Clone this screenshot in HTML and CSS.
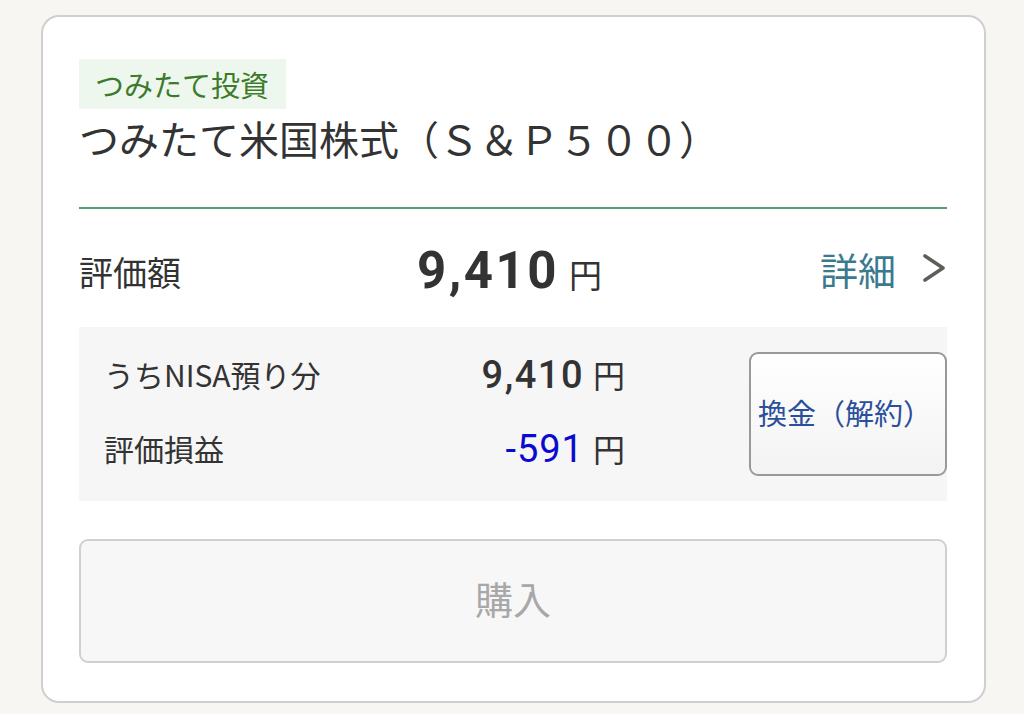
FILE: index.html
```html
<!DOCTYPE html>
<html lang="ja">
<head>
  <meta charset="UTF-8" />
  <meta name="viewport" content="width=device-width, initial-scale=1.0" />
  <title>つみたて米国株式</title>
  <link rel="stylesheet" href="styles.css">
</head>
<body>
  <div class="fund-card">
    <span class="badge">つみたて投資</span>
    <h2 class="fund-name">つみたて米国株式（Ｓ＆Ｐ５００）</h2>

    <div class="value-row">
      <span class="value-label">評価額</span>
      <span class="value-amount"><span class="num">9,410</span><span class="yen">円</span></span>
      <a class="detail-link" href="#">詳細
        <svg class="chevron" width="26" height="30" viewBox="0 0 26 30">
          <path d="M4 3 L22 15 L4 27" fill="none" stroke="#5f5f5a" stroke-width="3.6" stroke-linecap="round" stroke-linejoin="round"/>
        </svg>
      </a>
    </div>

    <div class="sub-box">
      <div class="sub-rows">
        <div class="sub-row">
          <span class="sub-label">うちNISA預り分</span>
          <span class="sub-amount"><span class="num">9,410</span><span class="yen">円</span></span>
        </div>
        <div class="sub-row">
          <span class="sub-label">評価損益</span>
          <span class="sub-amount"><span class="num minus">-591</span><span class="yen">円</span></span>
        </div>
      </div>
      <button class="sell-btn">換金（解約）</button>
    </div>

    <button class="buy-btn" disabled>購入</button>
  </div>
</body>
</html>
```

FILE: styles.css
```css
body {
  margin: 0;
  background: #f7f6f2;
  font-family: Roboto, "Noto Sans CJK JP", sans-serif;
  color: #333;
}
.fund-card {
  box-sizing: border-box;
  width: 945px;
  margin: 15px 0 0 41px;
  padding: 42px 37px 37px 36px;
  background: #fff;
  border: 2px solid #cfcfcf;
  border-radius: 18px;
  height: 688px;
}
.badge {
  display: inline-block;
  height: 50px;
  line-height: 50px;
  padding: 0 17px 0 16px;
  background: #eef7ee;
  color: #3d7b2c;
  font-family: "Noto Sans CJK JP", sans-serif;
  font-size: 29px;
}
.fund-name {
  margin: 0;
  height: 58px;
  line-height: 58px;
  font-family: "Noto Sans CJK JP", sans-serif;
  font-size: 40px;
  font-weight: normal;
  color: #333;
  border-bottom: 2px solid #56a077;
  padding-bottom: 40px;
}
.value-row {
  display: flex;
  align-items: center;
  height: 118px;
}
.value-label {
  width: 338px;
  font-family: "Noto Sans CJK JP", sans-serif;
  font-size: 34px;
  padding-top: 6px;
}
.value-amount {
  flex: 1;
  display: flex;
  align-items: baseline;
  padding-top: 4px;
}
.value-amount .num {
  font-size: 51px;
  font-weight: bold;
  letter-spacing: 2.5px;
}
.value-amount .yen {
  font-family: "Noto Sans CJK JP", sans-serif;
  font-size: 33px;
  margin-left: 10px;
}
.detail-link {
  display: flex;
  align-items: center;
  color: #3a7a8f;
  text-decoration: none;
  font-family: "Noto Sans CJK JP", sans-serif;
  font-size: 38px;
}
.chevron {
  margin-left: 25px;
}
.sub-box {
  display: flex;
  align-items: center;
  background: #f6f6f6;
  height: 174px;
  padding-left: 25px;
}
.sub-rows {
  width: 521px;
  display: flex;
  flex-direction: column;
  gap: 28px;
  padding-bottom: 6px;
}
.sub-row {
  display: flex;
  align-items: center;
  justify-content: space-between;
  height: 46px;
}
.sub-label {
  font-family: "Noto Sans CJK JP", sans-serif;
  font-size: 30px;
}
.sub-amount {
  display: flex;
  align-items: baseline;
}
.sub-amount .num {
  font-size: 38px;
  font-weight: 500;
  letter-spacing: 1.5px;
}
.sub-amount .minus {
  color: #0a0ad0;
  font-weight: normal;
  letter-spacing: 1px;
}
.sub-amount .yen {
  font-family: "Noto Sans CJK JP", sans-serif;
  font-size: 32px;
  margin-left: 9px;
}
.sell-btn {
  margin-left: auto;
  width: 198px;
  height: 124px;
  padding: 0 6px 4px 0;
  border: 2px solid #999;
  border-radius: 9px;
  background: linear-gradient(#fff, #f3f3f3);
  color: #2a4f9c;
  font-family: "Noto Sans CJK JP", sans-serif;
  font-size: 29px;
}
.buy-btn {
  display: block;
  width: 100%;
  height: 124px;
  margin-top: 38px;
  padding-bottom: 8px;
  border: 2px solid #d0d0d0;
  border-radius: 9px;
  background: #f7f7f7;
  color: #a8a8a8;
  font-family: "Noto Sans CJK JP", sans-serif;
  font-size: 38px;
}
```
